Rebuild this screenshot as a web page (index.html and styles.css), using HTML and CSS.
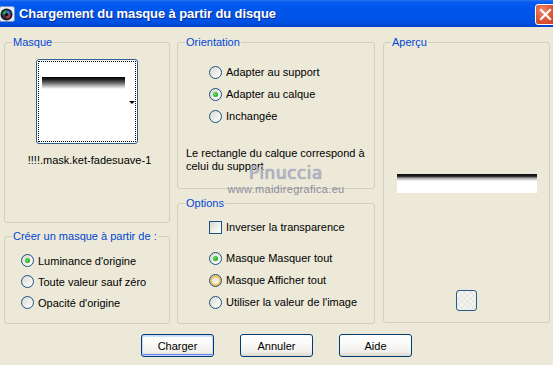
FILE: index.html
```html
<!DOCTYPE html>
<html lang="fr">
<head>
<meta charset="utf-8">
<title>Chargement du masque à partir du disque</title>
<link rel="stylesheet" href="styles.css">
</head>
<body>
<div class="window">
  <div class="titlebar">
    <svg class="app-icon" width="16" height="16" viewBox="0 0 16 16">
      <rect x="0.5" y="0.5" width="15" height="15" rx="2" fill="#e8eef8" stroke="#7d95c4"/>
      <circle cx="7.5" cy="8.5" r="6" fill="#1b1b22"/>
      <circle cx="7.5" cy="8.5" r="4.2" fill="#2f3640"/>
      <path d="M3.5 8.5 A4 4 0 0 1 7.5 4.5 L7.5 8.5 Z" fill="#2fa84f"/>
      <path d="M7.5 4.5 A4 4 0 0 1 11.5 8.5 L7.5 8.5 Z" fill="#3b6fd8"/>
      <path d="M11.5 8.5 A4 4 0 0 1 7.5 12.5 L7.5 8.5 Z" fill="#c0304a"/>
      <circle cx="7.5" cy="8.5" r="1.6" fill="#0d0d10"/>
    </svg>
    <span class="title">Chargement du masque à partir du disque</span>
    <div class="close">
      <svg width="21" height="21" viewBox="0 0 21 21">
        <path d="M6 6 L15 15 M15 6 L6 15" stroke="#fff" stroke-width="2.2" stroke-linecap="square"/>
      </svg>
    </div>
  </div>

  <div class="content">
    <div class="panels">
      <div class="col col-left">
        <fieldset class="group g-masque">
          <legend>Masque</legend>
          <div class="thumb">
            <div class="thumb-focus"></div>
            <div class="thumb-bar"></div>
            <span class="thumb-arrow"></span>
          </div>
          <div class="mask-name">!!!!.mask.ket-fadesuave-1</div>
        </fieldset>
        <fieldset class="group g-creer">
          <legend>Créer un masque à partir de :</legend>
          <div class="options-list">
            <label class="row"><span class="radio checked"></span>Luminance d'origine</label>
            <label class="row"><span class="radio"></span>Toute valeur sauf zéro</label>
            <label class="row"><span class="radio"></span>Opacité d'origine</label>
          </div>
        </fieldset>
      </div>

      <div class="col col-mid">
        <fieldset class="group g-orient">
          <legend>Orientation</legend>
          <div class="orient-list">
            <label class="row wide"><span class="radio"></span>Adapter au support</label>
            <label class="row wide"><span class="radio checked"></span>Adapter au calque</label>
            <label class="row wide"><span class="radio"></span>Inchangée</label>
          </div>
          <p class="note">Le rectangle du calque correspond à celui du support</p>
        </fieldset>
        <fieldset class="group g-options">
          <legend>Options</legend>
          <div class="opt-list">
            <label class="row wide check-row"><span class="checkbox"></span>Inverser la transparence</label>
            <div class="opt-radios">
              <label class="row wide"><span class="radio checked"></span>Masque Masquer tout</label>
              <label class="row wide"><span class="radio hover"></span>Masque Afficher tout</label>
              <label class="row wide"><span class="radio"></span>Utiliser la valeur de l'image</label>
            </div>
          </div>
        </fieldset>
      </div>

      <div class="col col-right">
        <fieldset class="group g-apercu">
          <legend>Aperçu</legend>
          <div class="preview-bar"></div>
          <div class="mini-btn"></div>
        </fieldset>
      </div>
    </div>

    <div class="buttons">
      <button class="btn default">Charger</button>
      <button class="btn">Annuler</button>
      <button class="btn">Aide</button>
    </div>
  </div>

  <div class="watermark">
    <div class="wm-name">Pinuccia</div>
    <div class="wm-url">www.maidiregrafica.eu</div>
  </div>
</div>
</body>
</html>
```

FILE: styles.css
```css
* { box-sizing: border-box; }

html, body {
  margin: 0;
  padding: 0;
  background: #ECE9D8;
}

.window {
  position: relative;
  width: 553px;
  height: 365px;
  overflow: hidden;
  background: #ECE9D8;
  font-family: "Liberation Sans", Arial, sans-serif;
  font-size: 11px;
  color: #000;
}

/* Title bar */
.titlebar {
  height: 27px;
  display: flex;
  align-items: center;
  background: linear-gradient(#2a74f2 0px, #0a5cf0 2px, #0058ee 5px, #0054e8 14px, #0053e6 20px, #004ddc 24px, #003fc8 27px);
}

.app-icon {
  flex: none;
  margin-left: -1px;
  margin-top: 1px;
}

.title {
  margin-left: 4px;
  color: #fff;
  font-weight: bold;
  font-size: 13px;
  letter-spacing: -0.1px;
  text-shadow: 1px 1px 0 #0b2b8a;
  white-space: nowrap;
}

.close {
  margin-left: auto;
  margin-right: -3px;
  margin-top: 1px;
  width: 21px;
  height: 21px;
  border: 1px solid #fff;
  border-radius: 3px;
  background: radial-gradient(circle at 35% 30%, #f08a6c 0%, #e2593a 45%, #c8401f 100%);
  display: flex;
  align-items: center;
  justify-content: center;
}
.close svg { margin: -1px; }

/* Body */
.content {
  padding: 9px 0 0 4px;
}

.panels {
  display: grid;
  grid-template-columns: 166px 198px 168px;
  column-gap: 7px;
}
.col-right { margin-left: 1px; }

.col {
  display: flex;
  flex-direction: column;
}
.col-left { gap: 7px; }
.col-mid { gap: 8px; }

.group {
  margin: 0;
  padding: 0;
  min-width: 0;
  border: 1px solid #D0D0BF;
  border-radius: 3px;
}
.group legend {
  margin-left: 7px;
  padding: 0 1px;
  color: #0046D5;
  line-height: 13px;
}

.g-masque { height: 187px; }
.g-creer { height: 94px; }
.g-orient { height: 153px; }
.g-options { height: 127px; }
.g-apercu {
  height: 287px;
  display: flex;
  flex-direction: column;
  align-items: center;
}

/* Masque thumbnail */
.thumb {
  position: relative;
  width: 102px;
  height: 85px;
  margin: 10px auto 0;
  border: 1px solid #2b5a8c;
  border-radius: 3px;
  background: #fff;
}
.thumb-focus {
  position: absolute;
  inset: 1px;
  border: 1px dotted #000;
}
.thumb-bar {
  position: absolute;
  left: 5px;
  top: 17px;
  width: 83px;
  height: 12px;
  background: linear-gradient(#000 0%, #1e1e1e 20%, #6a6a6a 50%, #c8c8c8 80%, #fff 100%);
}
.thumb-arrow {
  position: absolute;
  right: 2px;
  top: 41px;
  width: 0;
  height: 0;
  border-left: 3px solid transparent;
  border-right: 3px solid transparent;
  border-top: 3px solid #000;
}
.mask-name {
  margin-top: 10px;
  text-align: center;
  padding-left: 5px;
  line-height: 13px;
}

/* Rows */
.row {
  display: flex;
  align-items: center;
  height: 21px;
  white-space: nowrap;
}
.row.wide { height: 22px; }

.options-list {
  padding: 7px 0 0 16px;
}
.orient-list {
  padding: 12px 0 0 31px;
}
.note {
  margin: 20px 8px 0 8px;
  line-height: 13px;
}
.opt-list {
  padding: 6px 0 0 31px;
}
.opt-radios {
  margin-top: 9px;
}

.radio {
  flex: none;
  position: relative;
  width: 13px;
  height: 13px;
  margin-right: 4px;
  border-radius: 50%;
  border: 1px solid #1C5180;
  background: linear-gradient(135deg, #D8D8D1 0%, #EFEFEA 55%, #FFFFFF 100%);
}
.radio.checked::after {
  content: "";
  position: absolute;
  left: 3px;
  top: 3px;
  width: 5px;
  height: 5px;
  border-radius: 50%;
  background: radial-gradient(circle at 40% 40%, #6be36a 0%, #2bb52b 55%, #1a8f1a 100%);
}
.radio.hover {
  box-shadow: inset 0 0 0 2px #F7BE4E;
}

.checkbox {
  flex: none;
  width: 13px;
  height: 13px;
  margin-right: 4px;
  border: 1px solid #1C5180;
  background: linear-gradient(135deg, #D8D8D1 0%, #EFEFEA 55%, #FFFFFF 100%);
}

/* Apercu */
.preview-bar {
  width: 140px;
  height: 19px;
  margin-top: 125px;
  background: linear-gradient(#0c0c0c 0px, #1c1c1c 2px, #4a4a4a 3px, #a8a8a8 4px, #dcdcdc 6px, #ffffff 7px, #ffffff 100%);
}
.mini-btn {
  width: 21px;
  height: 21px;
  margin-top: 97px;
  border: 1px solid #2b5a8c;
  border-radius: 3px;
  background:
    repeating-conic-gradient(#f3f3f0 0% 25%, #e9e9e4 0% 50%) 0 0 / 6px 6px;
}

/* Buttons */
.buttons {
  display: flex;
  justify-content: center;
  gap: 26px;
  margin-top: 10px;
  padding-right: 4px;
}
.btn {
  width: 73px;
  height: 23px;
  padding: 0;
  font-family: "Liberation Sans", Arial, sans-serif;
  font-size: 11px;
  color: #000;
  border: 1px solid #003C74;
  border-radius: 3px;
  background: linear-gradient(#FFFFFF 0%, #FAFAF8 40%, #F0EFEA 80%, #DCD8CC 100%);
}
.btn.default {
  box-shadow: inset 0 0 0 1px #C6D7FB, inset 0 1px 0 1px #CEE7FF, inset 0 -1px 0 1px #6982EE;
}

/* Watermark */
.watermark {
  position: absolute;
  left: 224px;
  top: 163px;
  width: 124px;
  text-align: center;
  pointer-events: none;
}
.wm-name {
  font-family: "DejaVu Sans", Verdana, sans-serif;
  font-size: 17px;
  line-height: 20px;
  letter-spacing: 0.5px;
  color: #b6b6cc;
  text-shadow: 0 0 1px #6e6e80;
}
.wm-url {
  font-size: 11px;
  line-height: 12px;
  letter-spacing: 0.3px;
  color: #8c8c9c;
}
```
